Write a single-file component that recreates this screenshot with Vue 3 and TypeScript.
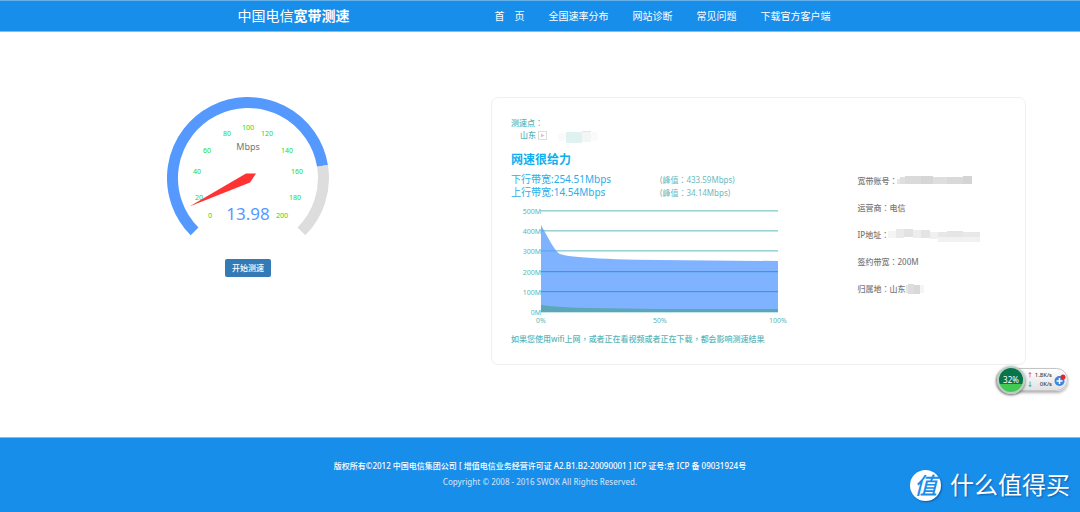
<script setup lang="ts">
interface GaugeMark { label: string; x: number; y: number }
interface Patch { x: number; y: number; w: number; h: number; fill: string }
interface Info { label: string; value: string; mask?: { w: number; patches: Patch[] } }

const navItems: string[] = ['首　页', '全国速率分布', '网站诊断', '常见问题', '下载官方客户端']

const marks: GaugeMark[] = [
  { label: '0', x: 43, y: 118 },
  { label: '20', x: 32, y: 100 },
  { label: '40', x: 30, y: 74 },
  { label: '60', x: 40, y: 53 },
  { label: '80', x: 60, y: 36 },
  { label: '100', x: 81, y: 30 },
  { label: '120', x: 100, y: 36 },
  { label: '140', x: 120, y: 53 },
  { label: '160', x: 130, y: 74 },
  { label: '180', x: 128, y: 100 },
  { label: '200', x: 115, y: 118 },
]

const speeds = [
  { text: '下行带宽:254.51Mbps', peak: '433.59Mbps' },
  { text: '上行带宽:14.54Mbps', peak: '34.14Mbps' },
]

const gridLines = [500, 400, 300, 200, 100, 0].map((v, i) => ({ label: `${v}M`, y: 6 + Math.round(i * 20.2) }))

const infos: Info[] = [
  {
    label: '宽带账号', value: '', mask: {
      w: 78, patches: [
        { x: 0, y: 4, w: 5, h: 5, fill: '#e6e6e6' },
        { x: 3, y: 2, w: 8, h: 7, fill: '#dedede' },
        { x: 8, y: 1, w: 16, h: 8, fill: '#dadada' },
        { x: 24, y: 1, w: 12, h: 8, fill: '#d6d6d6' },
        { x: 36, y: 2, w: 14, h: 7, fill: '#dedede' },
        { x: 50, y: 2, w: 16, h: 7, fill: '#d9d9d9' },
        { x: 66, y: 1, w: 9, h: 8, fill: '#d4d4d4' },
      ],
    },
  },
  { label: '运营商', value: '电信' },
  {
    label: 'IP地址', value: '', mask: {
      w: 94, patches: [
        { x: 0, y: 2, w: 9, h: 7, fill: '#f4f4f4' },
        { x: 8, y: 0, w: 8, h: 9, fill: '#e9e9e9' },
        { x: 16, y: 0, w: 9, h: 8, fill: '#e2e2e2' },
        { x: 25, y: 1, w: 8, h: 8, fill: '#ededed' },
        { x: 33, y: 1, w: 9, h: 8, fill: '#e4e4e4' },
        { x: 42, y: 3, w: 8, h: 7, fill: '#f0f0f0' },
        { x: 50, y: 3, w: 9, h: 5, fill: '#e7e7e7' },
        { x: 59, y: 2, w: 16, h: 6, fill: '#e5e5e5' },
        { x: 75, y: 3, w: 17, h: 5, fill: '#e8e8e8' },
        { x: 50, y: 8, w: 42, h: 5, fill: '#f1f1f1' },
      ],
    },
  },
  { label: '签约带宽', value: '200M' },
  {
    label: '归属地', value: '山东', mask: {
      w: 20, patches: [
        { x: 1, y: 2, w: 8, h: 8, fill: '#e6e6e6' },
        { x: 3, y: 1, w: 6, h: 10, fill: '#dddddd' },
        { x: 9, y: 2, w: 6, h: 9, fill: '#d8d8d8' },
        { x: 15, y: 2, w: 4, h: 8, fill: '#f2f5fa' },
      ],
    },
  },
]
</script>

<template>
  <div class="page">
    <header class="top">
      <div class="brand">中国电信<b>宽带测速</b></div>
      <nav class="nav">
        <a v-for="item in navItems" :key="item" href="#">{{ item }}</a>
      </nav>
    </header>

    <main class="main">
      <section class="tester">
        <svg class="gauge" viewBox="0 0 162 142" width="162" height="142" role="img" aria-label="13.98 Mbps">
          <path d="M27.6 134.4A75.5 75.5 0 1 1 155.5 68.9" fill="none" stroke="#5599ff" stroke-width="11" />
          <path d="M155.5 68.9A75.5 75.5 0 0 1 134.4 134.4" fill="none" stroke="#dddddd" stroke-width="11" />
          <text v-for="m in marks" :key="m.label" :x="m.x" :y="m.y" class="mark" dominant-baseline="central">{{ m.label }}</text>
          <text x="81" y="53" class="unit">Mbps</text>
          <text x="81" y="123" class="reading">13.98</text>
          <path d="M22.4 109.5L79 76.6H89L83 85.5Z" fill="#ff3333" />
        </svg>
        <button type="button" class="start">开始测速</button>
      </section>

      <section class="card">
        <div class="result">
          <p class="line">测速点<span class="colon">：</span></p>
          <div class="line place">
            <span>山东</span>
            <svg width="70" height="14" viewBox="0 0 70 14" aria-hidden="true">
              <rect x="2.5" y="2.5" width="8" height="8" fill="#fff" stroke="#dcdcdc" />
              <path d="M5 4.500L8.500 6.500L5 8.500Z" fill="#ccc" />
              <rect x="22" y="4" width="8" height="8" rx="3" fill="#fafafa" />
              <rect x="30" y="3" width="16" height="11" fill="#dff2f1" />
              <rect x="46" y="2" width="9" height="11" fill="#f4f5f5" />
              <rect x="46" y="2" width="9" height="1" fill="#e6e6e6" />
              <rect x="55" y="3" width="7" height="9" rx="3" fill="#fafafa" />
            </svg>
          </div>
          <h2>网速很给力</h2>
          <div v-for="s in speeds" :key="s.text" class="speed">
            <span>{{ s.text }}</span>
            <small>(峰值<span class="colon">：</span>{{ s.peak }})</small>
          </div>
          <svg class="chart" viewBox="0 0 290 124" width="290" height="124" role="img" aria-label="网速曲线">
            <g v-for="g in gridLines" :key="g.label">
              <rect x="30" :y="g.y - 1" width="237" height="1" fill="#9bd3d7" />
              <rect x="30" :y="g.y" width="237" height="1" fill="#c5e5e7" />
              <text x="30" :y="g.y + 3" text-anchor="end">{{ g.label }}</text>
            </g>
            <path d="M30 20L40 38Q46 48 49 49Q54 51 74 52.500Q100 54.500 147 55L267 56V107H30Z" fill="#5599ff" fill-opacity="0.75" />
            <path d="M30 100Q48 102.500 80 103L147 104H267V107H30Z" fill="#55a5aa" fill-opacity="0.85" />
            <rect v-for="g in gridLines.slice(3, 5)" :key="g.y" x="30" :y="g.y - 1" width="237" height="1" fill="#4c92d8" />
            <rect x="30" y="106" width="237" height="1" fill="#5aa9ae" />
            <text x="30" y="118" text-anchor="middle">0%</text>
            <text x="149" y="118" text-anchor="middle">50%</text>
            <text x="267" y="118" text-anchor="middle">100%</text>
          </svg>
          <p class="line tip">如果您使用wifi上网<span class="colon">，</span>或者正在看视频或者正在下载<span class="colon">，</span>都会影响测速结果</p>
        </div>
        <dl class="info">
          <div v-for="i in infos" :key="i.label">
            <dt>{{ i.label }}<span class="colon">：</span></dt>
            <dd>
              {{ i.value }}<svg v-if="i.mask" :width="i.mask.w" height="13" aria-hidden="true">
                <rect v-for="(p, n) in i.mask.patches" :key="n" :x="p.x" :y="p.y" :width="p.w" :height="p.h" :fill="p.fill" />
              </svg>
            </dd>
          </div>
        </dl>
      </section>
    </main>

    <footer class="foot">
      <p>版权所有©2012 中国电信集团公司 [ 增值电信业务经营许可证 A2.B1.B2-20090001 ] ICP 证号:京 ICP 备 09031924号</p>
      <p class="copy">Copyright © 2008 - 2016 SWOK All Rights Reserved.</p>
    </footer>

    <aside class="monitor">
      <div class="ball">32%</div>
      <div class="rates">
        <span><i class="up">↑</i>1.8K/s</span>
        <span><i class="down">↓</i>0K/s</span>
      </div>
      <svg width="13" height="14" viewBox="0 0 13 14" aria-hidden="true">
        <circle cx="5.500" cy="8" r="5" fill="#3b86df" />
        <path d="M5.500 5V11M2.500 8H8.500" stroke="#fff" stroke-width="1.500" />
        <circle cx="9" cy="4" r="2.500" fill="#e3262c" />
      </svg>
    </aside>

    <div class="watermark">
      <span class="seal">值</span>
      <span>什么值得买</span>
    </div>
  </div>
</template>

<style>
body {
  margin: 0;
}
</style>

<style scoped>
.page {
  position: relative;
  display: flex;
  flex-direction: column;
  min-height: 100vh;
  background: #fff;
  color: #777;
  font: 8px/12px "Noto Sans", "Noto Sans CJK SC", sans-serif;
}
p, h2, dl, dd {
  margin: 0;
}
.colon {
  font-family: "Noto Sans CJK TC", sans-serif;
  line-height: 1;
}
.top {
  display: grid;
  grid-template-columns: 257fr 586fr;
  align-items: center;
  box-sizing: border-box;
  height: 32px;
  padding-left: 22%;
  border-top: 1px solid #66b0ea;
  border-bottom: 1px solid #7fc0f3;
  background: #188eeb;
  color: #fff;
}
.brand {
  font-size: 14px;
  line-height: 20px;
}
.nav {
  display: flex;
  gap: 24px;
  white-space: nowrap;
}
.nav a {
  color: #fff;
  font-size: 10px;
  line-height: 16px;
  text-decoration: none;
}
.main {
  display: grid;
  grid-template-columns: 491fr 535fr;
  flex: 1;
  align-items: start;
  padding: 65px 5% 72px 0;
}
.tester {
  display: flex;
  flex-direction: column;
  align-items: center;
  gap: 20px;
  padding-left: 5px;
}
.gauge {
  display: block;
}
.gauge text {
  text-anchor: middle;
}
.mark {
  fill: #11dd22;
  font-size: 7px;
}
.unit {
  fill: #777;
  font-size: 9px;
}
.reading {
  fill: #5599ff;
  font-size: 17px;
}
.start {
  padding: 3px 7px;
  border: 0;
  border-radius: 2px;
  background: #337ab7;
  color: #fff;
  font: 500 8px/12px "Noto Sans", "Noto Sans CJK SC", sans-serif;
}
.card {
  display: grid;
  grid-template-columns: 70% 30%;
  padding: 19px;
  border: 1px solid #f0f0f0;
  border-radius: 7px;
}
.result {
  color: #5bb5b8;
}
.line {
  height: 12px;
  font-weight: 500;
  white-space: nowrap;
}
.place {
  display: flex;
  padding-left: 9px;
}
.place svg {
  flex: none;
}
h2 {
  margin: 9px 0 3px;
  color: #10aeef;
  font-size: 12px;
  line-height: 20px;
}
.speed {
  display: grid;
  grid-template-columns: 149px 1fr;
  height: 13px;
  color: #28aeea;
  font-size: 10px;
  line-height: 13px;
}
.speed small {
  color: #6cbabd;
  font-size: 8px;
}
.chart {
  display: block;
  margin: 6px 0 4px;
  fill: #5bb5b8;
  font-size: 7px;
}
.info {
  display: flex;
  flex-direction: column;
  gap: 15px;
  padding-top: 58px;
  white-space: nowrap;
  font-weight: 500;
}
.info div {
  display: flex;
  height: 12px;
}
.info dd {
  display: flex;
}
.info svg {
  margin-left: -1px;
}
.foot {
  padding: 21px 0 24px;
  border-top: 1px solid #7fbfee;
  background: #188eeb;
  color: #fff;
  font-weight: 500;
  text-align: center;
}
.foot p {
  line-height: 13px;
}
.foot .copy {
  margin-top: 3px;
  color: #c5dff5;
}
.monitor {
  position: absolute;
  top: 368px;
  right: 12px;
  display: flex;
  align-items: center;
  box-sizing: border-box;
  width: 72px;
  height: 23px;
  border: 1px solid #c4c4c4;
  border-radius: 12px;
  background: linear-gradient(#fff, #e2e2e2);
  box-shadow: 0 2px 3px rgba(0, 0, 0, 0.3);
}
.ball {
  flex: none;
  box-sizing: border-box;
  width: 28px;
  height: 28px;
  border: 2px solid #b9cfc4;
  border-radius: 50%;
  background: linear-gradient(#087449 0 65%, #42c954 65%);
  box-shadow: 0 1px 3px rgba(0, 0, 0, 0.6);
  color: #fff;
  font-size: 8px;
  line-height: 23px;
  text-align: center;
}
.rates {
  flex: 1;
  color: #222;
  font-size: 6px;
  line-height: 9px;
}
.rates span {
  display: flex;
  justify-content: space-between;
  padding: 0 2px;
}
.rates i {
  font-style: normal;
  font-weight: bold;
}
.up {
  color: #e34a32;
}
.down {
  color: #2b9b45;
}
.watermark {
  position: absolute;
  right: 10px;
  bottom: 11px;
  display: flex;
  align-items: center;
  gap: 9px;
  color: #fff;
  font-size: 24px;
  line-height: 32px;
  text-shadow: 1px 1px 2px #0b5ca5;
}
.seal {
  width: 31px;
  height: 31px;
  border-radius: 50%;
  background: #fff;
  box-shadow: 1px 1px 2px #0b5ca5;
  color: #188eeb;
  font-size: 23px;
  font-style: italic;
  font-weight: 500;
  line-height: 30px;
  text-align: center;
  text-shadow: none;
}
</style>
